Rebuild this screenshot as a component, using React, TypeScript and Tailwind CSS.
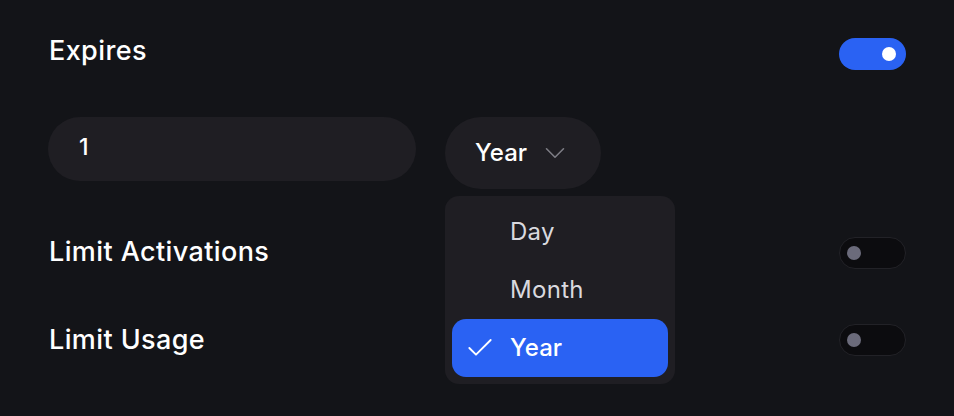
import { Check, ChevronDown } from "lucide-react";

function Toggle({ on }: { on: boolean }) {
  if (on) {
    return (
      <div className="flex h-[32px] w-[67px] items-center justify-end rounded-full bg-[#2a62f3] pr-[10px]">
        <div className="h-[14px] w-[14px] rounded-full bg-white" />
      </div>
    );
  }
  return (
    <div className="flex h-[32px] w-[67px] items-center rounded-full border border-[#222227] bg-[#0c0c0f] pl-[7px]">
      <div className="h-[14px] w-[14px] rounded-full bg-[#6b6b7b]" />
    </div>
  );
}

export default function App() {
  const options = ["Day", "Month", "Year"];
  const selected = "Year";

  return (
    <div
      className="h-[416px] w-[954px] bg-[#131418] px-12 pt-[38px] text-white"
      style={{ fontFamily: "Inter, 'Noto Sans', sans-serif" }}
    >
      <div className="flex h-[32px] items-center justify-between">
        <span className="-mt-[6px] pl-[1px] text-[27px] font-medium tracking-[0.4px]">Expires</span>
        <Toggle on />
      </div>

      <div className="mt-[47px] flex items-start gap-[29px]">
        <div className="flex h-[64px] w-[368px] items-center rounded-full bg-[#1f1e23] px-[31px] pb-[3px] text-[23px] font-medium">
          1
        </div>
        <div className="relative">
          <button className="flex h-[72px] w-[156px] items-center gap-[11px] rounded-full bg-[#1f1e23] pl-[30px] text-[24px] font-medium tracking-[0.1px]">
            Year
            <ChevronDown className="h-[34px] w-[34px] text-[#7d7d85]" strokeWidth={1.1} />
          </button>
          <div className="absolute left-0 top-[79px] z-10 w-[230px] rounded-[14px] bg-[#1f1e23] p-[7px]">
            {options.map((o) => (
              <div
                key={o}
                className={
                  o === selected
                    ? "flex h-[58px] items-center rounded-[14px] bg-[#2a62f3] text-[24px] font-medium tracking-[0.1px] text-white"
                    : "flex h-[58px] items-center text-[24px] tracking-[0.3px] text-[#d9d9df]"
                }
              >
                <span className="flex w-[58px] pl-[12px]">
                  {o === selected && <Check className="h-[32px] w-[32px]" strokeWidth={1.4} />}
                </span>
                {o}
              </div>
            ))}
          </div>
        </div>
      </div>

      <div className="mt-[48px] flex h-[32px] items-center justify-between">
        <span className="-mt-[2px] pl-[1px] text-[27px] font-medium tracking-[0.4px]">Limit Activations</span>
        <Toggle on={false} />
      </div>

      <div className="mt-[55px] flex h-[32px] items-center justify-between">
        <span className="pl-[1px] text-[27px] font-medium tracking-[0.4px]">Limit Usage</span>
        <Toggle on={false} />
      </div>
    </div>
  );
}
